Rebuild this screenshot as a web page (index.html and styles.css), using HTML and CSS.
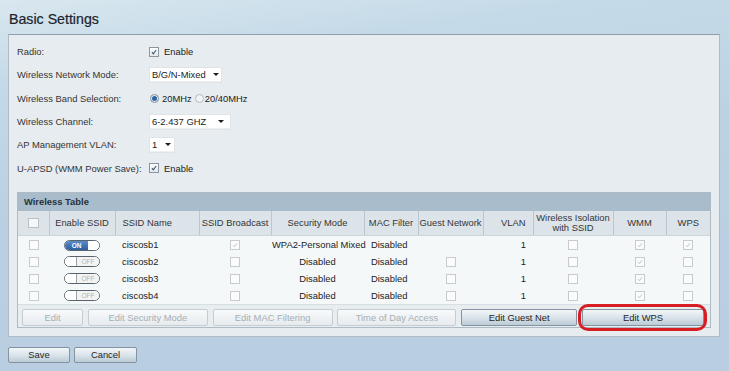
FILE: index.html
```html
<!DOCTYPE html>
<html>
<head>
<meta charset="utf-8">
<title>Basic Settings</title>
<link rel="stylesheet" href="styles.css">
</head>
<body>
<div class="page">
  <h1 class="title">Basic Settings</h1>
  <div class="panel">
    <div class="form">
      <div class="label">Radio:</div>
      <div class="ctrl"><span class="fcb"><svg viewBox="0 0 10 10"><path d="M2.4 5.1 L4.2 7.2 L7.7 2.5"/></svg></span><span class="ctext">Enable</span></div>

      <div class="label">Wireless Network Mode:</div>
      <div class="ctrl"><span class="sel sel-mode"><span>B/G/N-Mixed</span><i class="arr"></i></span></div>

      <div class="label">Wireless Band Selection:</div>
      <div class="ctrl"><span class="rb on"></span><span class="rtext">20MHz</span><span class="rb"></span><span class="rtext2">20/40MHz</span></div>

      <div class="label">Wireless Channel:</div>
      <div class="ctrl"><span class="sel sel-chan"><span>6-2.437 GHZ</span><i class="arr"></i></span></div>

      <div class="label">AP Management VLAN:</div>
      <div class="ctrl"><span class="sel sel-vlan"><span>1</span><i class="arr"></i></span></div>

      <div class="label">U-APSD (WMM Power Save):</div>
      <div class="ctrl"><span class="fcb"><svg viewBox="0 0 10 10"><path d="M2.4 5.1 L4.2 7.2 L7.7 2.5"/></svg></span><span class="ctext">Enable</span></div>
    </div>

    <div class="wt">
      <div class="wt-head">Wireless Table</div>
      <table class="grid">
        <colgroup>
          <col class="c1"><col class="c2"><col class="c3"><col class="c4"><col class="c5"><col class="c6"><col class="c7"><col class="c8"><col class="c9"><col class="c10"><col class="c11">
        </colgroup>
        <thead>
          <tr>
            <th><span class="cb hcb"></span></th>
            <th>Enable SSID</th>
            <th class="l">SSID Name</th>
            <th>SSID Broadcast</th>
            <th>Security Mode</th>
            <th>MAC Filter</th>
            <th>Guest Network</th>
            <th class="r">VLAN</th>
            <th>Wireless Isolation<br>with SSID</th>
            <th>WMM</th>
            <th>WPS</th>
          </tr>
        </thead>
        <tbody>
          <tr>
            <td><span class="cb"></span></td>
            <td><span class="tg on"><span class="tg-l">ON</span><span class="tg-r"></span></span></td>
            <td class="l">ciscosb1</td>
            <td><span class="cb ck"><svg viewBox="0 0 10 10"><path d="M2.6 5.2 L4.3 7.1 L7.5 2.8"/></svg></span></td>
            <td>WPA2-Personal Mixed</td>
            <td class="l">Disabled</td>
            <td></td>
            <td class="r">1</td>
            <td><span class="cb"></span></td>
            <td><span class="cb ck"><svg viewBox="0 0 10 10"><path d="M2.6 5.2 L4.3 7.1 L7.5 2.8"/></svg></span></td>
            <td><span class="cb ck"><svg viewBox="0 0 10 10"><path d="M2.6 5.2 L4.3 7.1 L7.5 2.8"/></svg></span></td>
          </tr>
          <tr>
            <td><span class="cb"></span></td>
            <td><span class="tg off"><span class="tg-l"></span><span class="tg-r">OFF</span></span></td>
            <td class="l">ciscosb2</td>
            <td><span class="cb"></span></td>
            <td>Disabled</td>
            <td class="l">Disabled</td>
            <td><span class="cb"></span></td>
            <td class="r">1</td>
            <td><span class="cb"></span></td>
            <td><span class="cb ck"><svg viewBox="0 0 10 10"><path d="M2.6 5.2 L4.3 7.1 L7.5 2.8"/></svg></span></td>
            <td><span class="cb"></span></td>
          </tr>
          <tr>
            <td><span class="cb"></span></td>
            <td><span class="tg off"><span class="tg-l"></span><span class="tg-r">OFF</span></span></td>
            <td class="l">ciscosb3</td>
            <td><span class="cb"></span></td>
            <td>Disabled</td>
            <td class="l">Disabled</td>
            <td><span class="cb"></span></td>
            <td class="r">1</td>
            <td><span class="cb"></span></td>
            <td><span class="cb ck"><svg viewBox="0 0 10 10"><path d="M2.6 5.2 L4.3 7.1 L7.5 2.8"/></svg></span></td>
            <td><span class="cb"></span></td>
          </tr>
          <tr>
            <td><span class="cb"></span></td>
            <td><span class="tg off"><span class="tg-l"></span><span class="tg-r">OFF</span></span></td>
            <td class="l">ciscosb4</td>
            <td><span class="cb"></span></td>
            <td>Disabled</td>
            <td class="l">Disabled</td>
            <td><span class="cb"></span></td>
            <td class="r">1</td>
            <td><span class="cb"></span></td>
            <td><span class="cb ck"><svg viewBox="0 0 10 10"><path d="M2.6 5.2 L4.3 7.1 L7.5 2.8"/></svg></span></td>
            <td><span class="cb"></span></td>
          </tr>
        </tbody>
      </table>
      <div class="actions">
        <button class="btn b-edit">Edit</button>
        <button class="btn b-sec">Edit Security Mode</button>
        <button class="btn b-mac">Edit MAC Filtering</button>
        <button class="btn b-tod">Time of Day Access</button>
        <button class="btn en b-guest">Edit Guest Net</button>
        <span class="ring"><button class="btn en b-wps">Edit WPS</button></span>
      </div>
    </div>
  </div>
  <div class="footer">
    <button class="btn en b-save">Save</button>
    <button class="btn en b-cancel">Cancel</button>
  </div>
</div>
</body>
</html>
```

FILE: styles.css
```css
* { box-sizing: border-box; }

html, body {
  margin: 0;
  padding: 0;
}

body {
  font-family: "Liberation Sans", Arial, sans-serif;
  font-size: 9.4px;
  color: #2e2e2e;
  min-height: 371px;
  background:
    linear-gradient(172deg, rgba(220, 233, 240, 0.9) 0%, rgba(205, 224, 236, 0.5) 18%, rgba(185, 206, 225, 0) 45%),
    linear-gradient(180deg, #bcd4e4 0%, #b9cee1 100%);
}

.page {
  padding: 11px 9px 8px 8px;
}

.title {
  margin: 0 0 7px 1px;
  font-size: 14.2px;
  font-weight: normal;
  line-height: 16px;
  color: #1a242e;
  -webkit-text-stroke: 0.2px #1a242e;
}

.panel {
  background: #e6ecef;
  border: 1px solid #aebbc5;
  border-top-color: #8e9eac;
  padding: 5px 8px 8px 8px;
}

/* ---------- top form ---------- */
.form {
  display: grid;
  grid-template-columns: 132px auto;
  grid-auto-rows: 23.3px;
  align-items: center;
  color: #353535;
}

.ctrl {
  display: flex;
  align-items: center;
  color: #222;
}

.fcb {
  width: 10px;
  height: 10px;
  border: 1px solid #8a96a1;
  background: linear-gradient(#ffffff, #e4e8eb);
  display: inline-flex;
}
.fcb svg { width: 100%; height: 100%; }
.fcb path { fill: none; stroke: #3c5670; stroke-width: 1.4; }

.ctext { margin-left: 5px; }

.sel {
  display: inline-flex;
  align-items: center;
  height: 16px;
  background: #ffffff;
  border: 1px solid #e0e4e7;
  box-shadow: inset 0 -1px 0 #eef1f3;
  padding-left: 2px;
}
.sel .arr {
  margin-left: auto;
  width: 0;
  height: 0;
  border-left: 3px solid transparent;
  border-right: 3px solid transparent;
  border-top: 3.5px solid #1e1e1e;
}
.sel-mode { width: 73px; padding-right: 2px; }
.sel-chan { width: 82px; padding-right: 6px; }
.sel-vlan { width: 26px; padding-right: 3px; }

.rb {
  width: 9px;
  height: 9px;
  border-radius: 50%;
  border: 1px solid #b3bac0;
  background: #f2f3f4;
  display: inline-flex;
  align-items: center;
  justify-content: center;
  margin-left: 1px;
}
.rb.on { border-color: #7f8d98; background: #e8eef3; }
.rb.on::after {
  content: "";
  width: 5px;
  height: 5px;
  border-radius: 50%;
  background: #2d64a5;
}
.rtext { margin-left: 3px; margin-right: 2px; }
.rtext2 { margin-left: 1px; }

/* ---------- wireless table ---------- */
.wt {
  margin-top: 12px;
  border: 1px solid #aebbc5;
  background: #f5f8f9;
}

.wt-head {
  height: 18px;
  line-height: 18px;
  background: #a8bccb;
  font-weight: bold;
  color: #25313c;
  padding-left: 6px;
}

.grid {
  width: 100%;
  border-collapse: collapse;
  table-layout: fixed;
}

.c1 { width: 31px; }
.c2 { width: 66px; }
.c3 { width: 84px; }
.c4 { width: 72px; }
.c5 { width: 93px; }
.c6 { width: 54px; }
.c7 { width: 65px; }
.c8 { width: 50px; }
.c9 { width: 80px; }
.c10 { width: 53px; }
.c11 { width: 44px; }

.grid th {
  height: 25px;
  background: #dce4ea;
  font-weight: normal;
  color: #353535;
  border-left: 1px solid #bac7d0;
  border-bottom: 1px solid #cdd6dc;
  padding: 0 1px;
  line-height: 10px;
  text-align: center;
  white-space: nowrap;
}
.grid th:first-child { border-left: 0; }

.grid td {
  height: 17px;
  padding: 0 1px;
  text-align: center;
  color: #222;
  white-space: nowrap;
}

.grid .l { text-align: left; padding-left: 7px; }
.grid .r { text-align: right; padding-right: 7px; }

.cb {
  display: inline-block;
  vertical-align: middle;
  width: 10px;
  height: 10px;
  border: 1px solid #c5cbd0;
  background: #fbfbfb;
}
.cb svg { display: block; width: 100%; height: 100%; }
.cb path { fill: none; stroke: #b3babf; stroke-width: 1; }
.hcb { width: 11px; height: 10px; border-color: #b9c0c6; background: #f6f7f8; }

.tg {
  display: inline-flex;
  vertical-align: middle;
  width: 36px;
  height: 11px;
  border: 1px solid #59636d;
  border-radius: 6px;
  overflow: hidden;
  background: #fff;
  font-size: 6.5px;
  line-height: 9px;
}
.tg.on .tg-l {
  flex: 0 0 23px;
  background: linear-gradient(#5b8cc8, #2d5e9e);
  color: #fff;
  font-weight: bold;
  text-align: center;
}
.tg.on .tg-r { flex: 1; background: #fff; }
.tg.off .tg-l { flex: 0 0 11px; background: #fff; }
.tg.off .tg-r {
  flex: 1;
  background: #f3f3f3;
  border-left: 1px solid #9aa1a7;
  color: #b0b4b8;
  text-align: center;
}

.actions {
  display: flex;
  gap: 4.8px;
  height: 23px;
  padding: 4px 5px 0 4px;
  background: #e8edf0;
  border-top: 1px solid #d8dfe4;
}

.btn {
  font-family: inherit;
  font-size: 9.4px;
  height: 17px;
  padding: 0;
  border: 1px solid #c6cdd2;
  border-radius: 2px;
  background: linear-gradient(#f8fafb, #e7ebee);
  color: #a7aeb3;
  line-height: 15px;
}
.btn.en {
  border-color: #8393a0;
  background: linear-gradient(#f2f6f8 0%, #dde6ec 45%, #bccbd6 100%);
  color: #1f1f1f;
}

.b-edit { width: 61px; }
.b-sec { width: 120px; }
.b-mac { width: 120px; }
.b-tod { width: 119px; }
.b-guest { width: 116px; }
.b-wps { width: 122px; }

.ring {
  position: relative;
  display: inline-flex;
}
.ring::after {
  content: "";
  position: absolute;
  left: -3.5px;
  right: -3.5px;
  top: -5px;
  bottom: -4.5px;
  border: 3px solid #d71e22;
  border-radius: 10px;
  pointer-events: none;
}

.footer {
  display: flex;
  gap: 4px;
  margin-top: 10px;
}
.b-save { width: 62px; height: 16px; line-height: 14px; }
.b-cancel { width: 63px; height: 16px; line-height: 14px; }
```
